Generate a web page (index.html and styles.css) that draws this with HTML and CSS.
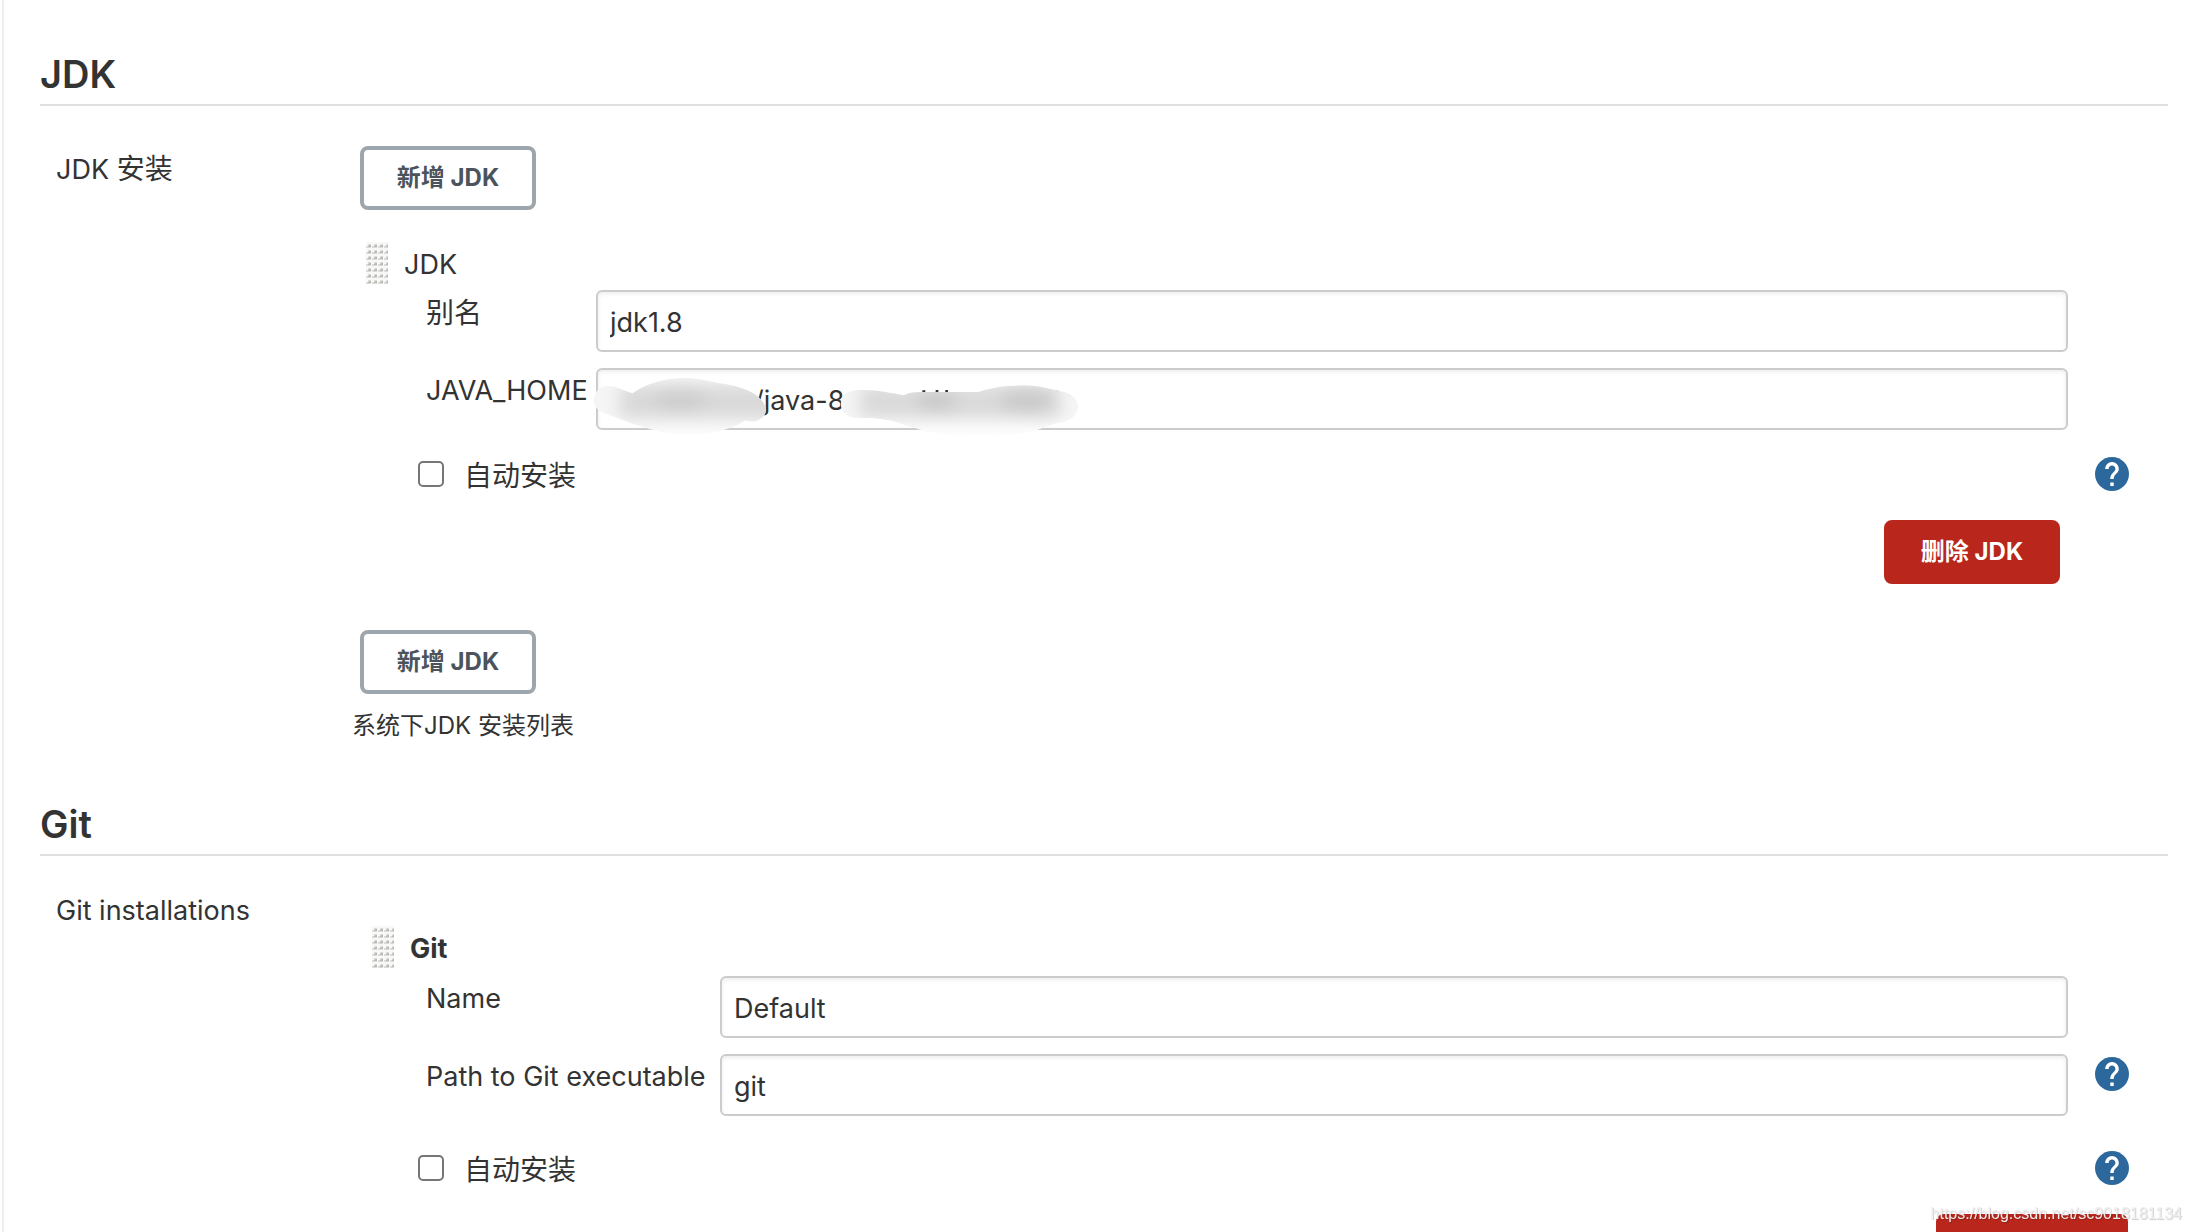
FILE: index.html
```html
<!DOCTYPE html>
<html lang="zh-CN">
<head>
<meta charset="utf-8">
<title>全局工具配置</title>
<link rel="stylesheet" href="styles.css">
</head>
<body>
<svg class="defs" aria-hidden="true">
  <defs>
    <pattern id="grip-dot" width="6" height="6" patternUnits="userSpaceOnUse">
      <rect width="6" height="6" fill="#f8f8f6"/>
      <path d="M2 2h3v4H0V4h2z" fill="#dcdcda"/>
      <path d="M3 3h2v2H2V4h1z" fill="#b9b9b6"/>
    </pattern>
    <symbol id="grip" viewBox="0 0 22 42"><rect width="22" height="42" fill="url(#grip-dot)"/></symbol>
    <symbol id="help" viewBox="2 2 20 20">
      <path fill="#2c689c" d="M12 2C6.48 2 2 6.48 2 12s4.48 10 10 10 10-4.480 10-10S17.520 2 12 2z"/>
      <path fill="#fff" d="M13 19h-2v-2h2v2zM15.070 11.250l-.9.920C13.450 12.900 13 13.500 13 15h-2v-.5c0-1.100.45-2.100 1.170-2.830l1.240-1.260c.37-.36.59-.86.59-1.410 0-1.100-.9-2-2-2s-2 .9-2 2H8c0-2.210 1.790-4 4-4s4 1.790 4 4c0 .88-.36 1.680-.93 2.250z"/>
    </symbol>
  </defs>
</svg>
<main class="config">
  <section class="tool">
    <h2 class="tool-title">JDK</h2>
    <div class="tool-body">
      <div class="tool-label">JDK <span class="cjk">安装</span></div>
      <div class="tool-content">
        <button class="btn btn-add" type="button">新增 JDK</button>
        <div class="entry entry-jdk">
          <div class="entry-head"><svg class="grip"><use href="#grip"/></svg><span class="entry-name">JDK</span></div>
          <div class="fields fields-jdk">
            <label class="field-label cjk" for="jdk-name">别名</label>
            <input class="text" id="jdk-name" type="text" value="jdk1.8">
            <label class="field-label" for="jdk-home">JAVA_HOME</label>
            <div class="masked">
              <input class="text text-masked" id="jdk-home" type="text" value="/java-8">
              <svg class="smudge" viewBox="0 0 1560 300" aria-hidden="true">
                <defs>
                  <clipPath id="smudge-a"><path d="M42 150C42 125 60 108 84 108C110 108 135 124 158 130C200 100 255 84 318 84C360 84 395 98 430 101C475 108 510 120 534 140C552 155 560 172 556 190C545 212 520 220 497 211C450 240 400 252 340 252C240 254 170 226 70 188C50 180 42 168 42 150Z"/></clipPath>
                  <clipPath id="smudge-b"><path d="M782 160C784 135 805 120 835 120C885 118 930 128 972 136C985 128 1000 126 1030 126L1196 126C1240 110 1290 106 1340 106C1385 108 1420 120 1455 127C1480 135 1495 150 1494 172C1490 202 1465 218 1422 221C1370 245 1290 258 1190 259C1080 258 1020 240 960 220C910 203 870 204 830 204C800 203 782 185 782 160Z"/></clipPath>
                  <filter id="soft" x="-50%" y="-80%" width="200%" height="260%"><feGaussianBlur stdDeviation="24"/></filter>
                </defs>
                <g fill="#333"><path d="M1027 121h9v6h-9zM1067 120h8v7h-8zM1096 120h8v7h-8zM1422 122h14v4h-14z"/></g>
                <g clip-path="url(#smudge-a)">
                  <rect width="700" height="300" fill="#f5f5f5"/>
                  <g filter="url(#soft)"><rect x="120" y="105" width="480" height="100" fill="#d9d9d9"/><ellipse cx="300" cy="148" rx="80" ry="34" fill="#cecece"/><rect y="240" width="700" height="60" fill="#fff"/></g>
                </g>
                <g clip-path="url(#smudge-b)">
                  <rect x="700" width="860" height="300" fill="#f5f5f5"/>
                  <g filter="url(#soft)"><rect x="840" y="105" width="600" height="100" fill="#dadada"/><ellipse cx="1070" cy="150" rx="60" ry="36" fill="#cbcbcb"/><ellipse cx="1340" cy="150" rx="80" ry="38" fill="#cacaca"/><rect x="700" y="230" width="860" height="70" fill="#fff"/></g>
                </g>
              </svg>
            </div>
          </div>
          <div class="auto auto-jdk">
            <input class="check" id="jdk-auto" type="checkbox"><label class="auto-label cjk" for="jdk-auto">自动安装</label>
            <button class="help" type="button" aria-label="帮助"><svg><use href="#help"/></svg></button>
          </div>
          <div class="remove"><button class="btn btn-delete" type="button">删除 JDK</button></div>
        </div>
        <button class="btn btn-add" type="button">新增 JDK</button>
        <p class="caption">系统下JDK 安装列表</p>
      </div>
    </div>
  </section>
  <section class="tool">
    <h2 class="tool-title">Git</h2>
    <div class="tool-body tool-body-git">
      <div class="tool-label">Git installations</div>
      <div class="tool-content">
        <div class="entry entry-git">
          <div class="entry-head entry-head-git"><svg class="grip"><use href="#grip"/></svg><span class="entry-name">Git</span></div>
          <div class="fields fields-git">
            <label class="field-label" for="git-name">Name</label>
            <input class="text" id="git-name" type="text" value="Default">
            <label class="field-label" for="git-path">Path to Git executable</label>
            <input class="text" id="git-path" type="text" value="git">
            <button class="help" type="button" aria-label="帮助"><svg><use href="#help"/></svg></button>
          </div>
          <div class="auto auto-git">
            <input class="check" id="git-auto" type="checkbox"><label class="auto-label cjk" for="git-auto">自动安装</label>
            <button class="help" type="button" aria-label="帮助"><svg><use href="#help"/></svg></button>
          </div>
          <div class="remove remove-git"><button class="btn btn-delete btn-wide" type="button" aria-label="Delete Git"></button></div>
        </div>
      </div>
    </div>
  </section>
</main>
<div class="watermark">https://blog.csdn.net/sc9018181134</div>
</body>
</html>
```
FILE: styles.css
```css
* { box-sizing: border-box; }

html { height: 100%; overflow: hidden; }

body {
  margin: 0;
  height: 100%;
  overflow: hidden;
  background: #fff;
  color: #333;
  font: 27px/40px Inter, "Noto Sans CJK SC", sans-serif;
}

button, input { font: inherit; color: inherit; }

.defs { position: absolute; width: 0; height: 0; }

.cjk { font-size: 28px; }

.config {
  min-height: 100%;
  margin-left: 2px;
  padding: 47px 22px 0 36px;
  border-left: 2px solid #eee;
}

.tool-title {
  margin: 0;
  padding-bottom: 3px;
  border-bottom: 2px solid #e0e0e0;
  font-size: 38px;
  font-weight: 600;
  line-height: 54px;
}

.tool-body {
  display: grid;
  grid-template-columns: 312px minmax(0, 1fr);
  padding-top: 40px;
}
.tool-body-git { padding-top: 32px; }

.tool-label { padding: 3px 0 0 16px; }

.btn {
  display: block;
  height: 64px;
  min-width: 176px;
  padding: 0 28px;
  border: 4px solid #9ca6ac;
  border-radius: 8px;
  background: #fff;
  color: #4b545d;
  font-size: 24px;
  font-weight: 700;
  line-height: 32px;
  white-space: nowrap;
}

.btn-add { margin-left: 8px; }
.btn-delete { border-color: #b9261b; background: #b9261b; color: #fff; }
.btn-wide { width: 192px; }

.entry-jdk { padding: 32px 0 46px; }
.entry-git { padding-top: 38px; }

.entry-head {
  display: flex;
  align-items: center;
  gap: 16px;
  height: 42px;
  padding-left: 14px;
}
.entry-head-git { padding-left: 20px; font-weight: 700; }
.entry-name { padding-top: 3px; }

.grip { width: 22px; height: 42px; }

.fields {
  display: grid;
  row-gap: 16px;
  padding-left: 74px;
}
.fields-jdk { grid-template-columns: 170px minmax(0, 1fr) 100px; padding-top: 6px; }
.fields-git { grid-template-columns: 294px minmax(0, 1fr) 100px; padding-top: 8px; }

.field-label { grid-column: 1; padding-top: 3px; white-space: nowrap; }

.text {
  display: block;
  width: 100%;
  height: 62px;
  padding: 2px 12px 0;
  border: 2px solid #ccc;
  border-radius: 6px;
  outline: 0;
  background: #fff;
  box-shadow: inset 0 2px 4px #eee;
}
.text-masked { padding-left: 156px; }

.masked { position: relative; }
.smudge { position: absolute; left: -16px; top: -18px; width: 520px; height: 100px; }

.help {
  display: block;
  width: 34px;
  height: 34px;
  margin: 3px 0 0 27px;
  padding: 0;
  border: 0;
  background: none;
}
.help svg { display: block; width: 34px; height: 34px; }

.auto {
  display: flex;
  align-items: center;
  gap: 20px;
  height: 40px;
  padding: 0 39px 0 66px;
}
.auto-jdk { margin-top: 24px; }
.auto-git { margin-top: 32px; }
.auto-label { padding-top: 4px; }
.auto .help { margin: 0 0 0 auto; }

.check {
  appearance: none;
  width: 26px;
  height: 26px;
  margin: 0;
  border: 2px solid #767676;
  border-radius: 5px;
  background: #fff;
}

.remove {
  display: flex;
  justify-content: flex-end;
  padding: 26px 108px 0 0;
}
.remove-git { padding-right: 40px; }

.caption { margin: 10px 0 49px; font-size: 24px; line-height: 44px; }

.watermark {
  position: fixed;
  right: 8px;
  bottom: 6px;
  color: #eee;
  text-shadow: 1px 1px 1px #0003;
  font: 16px/24px "Liberation Sans", sans-serif;
}
```
